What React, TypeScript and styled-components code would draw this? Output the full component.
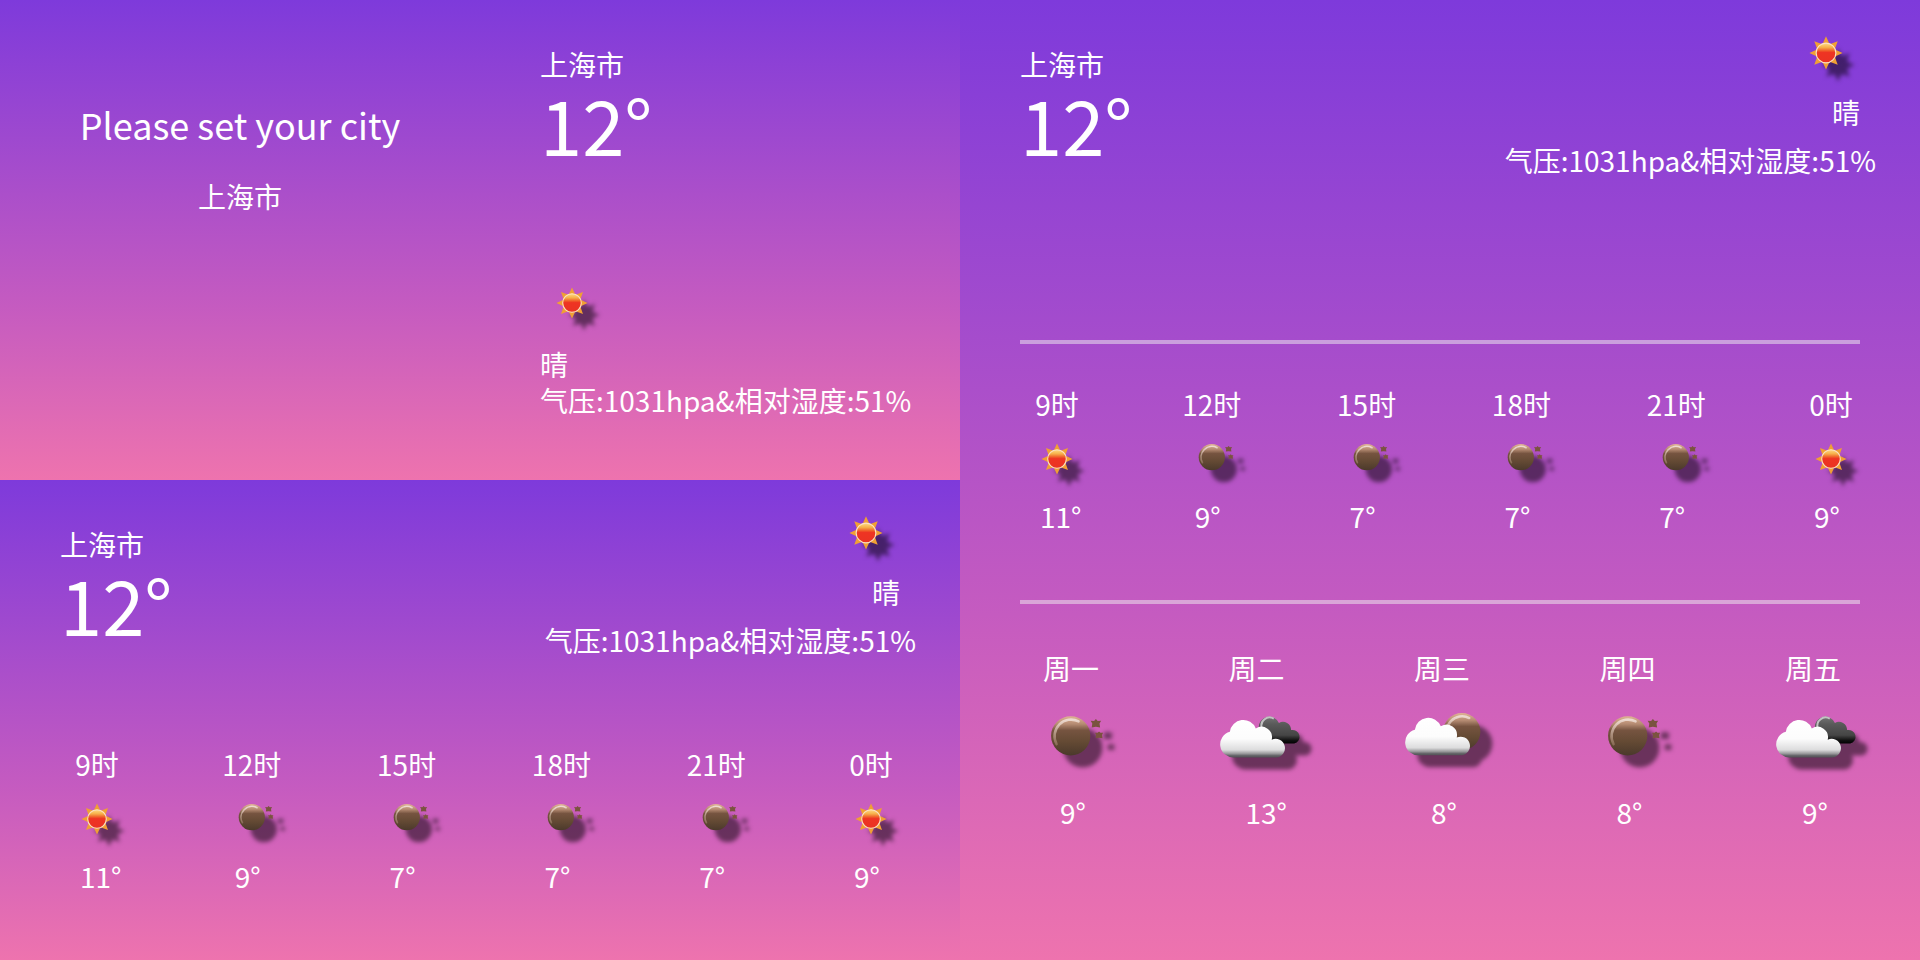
import React, { useId, useState } from "react";
import styled, { createGlobalStyle } from "styled-components";

const GlobalStyle = createGlobalStyle`
  * { box-sizing: border-box; }
  body {
    margin: 0;
    color: #fff;
    font-family: "Noto Sans CJK SC", "Noto Sans", sans-serif;
    font-size: 28px;
    line-height: 36px;
  }
`;

const Board = styled.main`
  display: grid;
  grid-template-columns: 1fr 1fr;
  min-height: 100vh;
`;

const Column = styled.div`
  display: grid;
  grid-template-rows: 1fr 1fr;
`;

const Pair = styled.div`
  display: grid;
  grid-template-columns: 1fr 1fr;
`;

const Card = styled.section`
  display: flex;
  flex-direction: column;
  min-width: 0;
  background: linear-gradient(#7e3adb, #c55bc0 64%, #ee73ae);
`;

const SetupCard = styled(Card)`
  align-items: center;
  gap: 30px;
  padding: 100px 40px 60px;
`;

const SetupLabel = styled.label`
  font-size: 36px;
  line-height: 48px;
`;

const CityInput = styled.input`
  width: 100%;
  height: 36px;
  padding: 0;
  border: 0;
  outline: 0;
  background: transparent;
  color: inherit;
  font: inherit;
  text-align: center;
`;

const SmallCard = styled(Card)`
  justify-content: space-between;
  padding: 46px 0 62px 60px;
`;

const City = styled.h2`
  margin: 0;
  font-size: 28px;
  font-weight: 400;
`;

const Temperature = styled.p`
  margin: 0;
  font-size: 76px;
  line-height: 82px;
`;

const SmallSummary = styled.div`
  white-space: nowrap;

  svg { margin-bottom: 10px; }
`;

const Line = styled.p`
  margin: 0;
`;

const Header = styled.header`
  display: flex;
  justify-content: space-between;
  min-height: 184px;
  padding: 0 44px 0 60px;
`;

const Place = styled.div`
  padding-top: 46px;
`;

const Summary = styled.div`
  display: flex;
  flex-direction: column;
  align-items: flex-end;
  padding-top: 20px;
  line-height: 48px;
  white-space: nowrap;
`;

const Condition = styled.div`
  display: flex;
  flex-direction: column;
  align-items: flex-end;
  margin-right: 16px;
`;

const Divider = styled.hr`
  height: 4px;
  margin: 0 60px;
  border: 0;
  background: rgba(240, 240, 240, 0.5);
`;

const Forecast = styled.ol<{ $top: number; $bottom: number }>`
  display: flex;
  justify-content: space-between;
  margin: 0;
  padding: ${(p) => p.$top}px 57px ${(p) => p.$bottom}px 65px;
  list-style: none;
`;

const Daily = styled(Forecast)`
  padding-left: 63px;
  padding-right: 59px;
`;

const Slot = styled.li<{ $width: number }>`
  display: flex;
  flex-direction: column;
  align-items: center;
  gap: 6px;
  width: ${(p) => p.$width}px;
`;

const SlotTemp = styled.span<{ $indent: number }>`
  align-self: stretch;
  padding-left: ${(p) => p.$indent}px;
`;

const Spacer = styled.div`
  flex: 1;
`;

const TopArea = styled.div`
  min-height: 340px;
`;

const Glyph = styled.svg`
  display: block;
  flex: none;
  overflow: visible;
  filter: drop-shadow(12px 12px 2px rgba(0, 0, 0, 0.5));
`;

type Weather = "sun" | "moon" | "cloudy" | "cloudyNight";

function Sun({ id }: { id: string }) {
  return (
    <>
      <defs>
        <linearGradient id={`${id}-s`} x1="0" y1="0" x2="0" y2="1">
          <stop offset="0" stopColor="#ffdc84" />
          <stop offset="0.22" stopColor="#f6b04a" />
          <stop offset="0.4" stopColor="#ef5a28" />
          <stop offset="0.48" stopColor="#ee3423" />
          <stop offset="1" stopColor="#ea3323" />
        </linearGradient>
      </defs>
      <g fill="#f0a033">
        {[0, 45, 90, 135, 180, 225, 270, 315].map((a) => (
          <path key={a} d="M32 15.4 L36.2 24.6 H27.8 Z" transform={`rotate(${a} 32 31)`} />
        ))}
      </g>
      <circle cx="32" cy="31" r="9.3" fill={`url(#${id}-s)`} stroke="#fbe2c4" strokeWidth="1.1" />
    </>
  );
}

function MoonDisc({ id, cx, cy, r }: { id: string; cx: number; cy: number; r: number }) {
  return (
    <>
      <defs>
        <linearGradient id={`${id}-m`} x1="0" y1="0" x2="0" y2="1">
          <stop offset="0" stopColor="#e0b394" />
          <stop offset="0.2" stopColor="#b58b72" />
          <stop offset="0.36" stopColor="#765440" />
          <stop offset="0.65" stopColor="#644a34" />
          <stop offset="1" stopColor="#4b392b" />
        </linearGradient>
        <linearGradient id={`${id}-h`} x1="0" y1="0" x2="0" y2="1">
          <stop offset="0" stopColor="#f2e4dc" stopOpacity="0.85" />
          <stop offset="1" stopColor="#c9a78f" stopOpacity="0.4" />
        </linearGradient>
      </defs>
      <circle cx={cx} cy={cy} r={r} fill={`url(#${id}-m)`} />
      <path
        d={`M${cx - r * 0.72} ${cy + r * 0.42} A${r * 0.84} ${r * 0.84} 0 0 1 ${cx + r * 0.4} ${cy - r * 0.73}`}
        fill="none"
        stroke={`url(#${id}-h)`}
        strokeWidth="1.7"
        strokeLinecap="round"
      />
    </>
  );
}

function Moon({ id }: { id: string }) {
  return (
    <>
      <MoonDisc id={id} cx={31.8} cy={29.2} r={13.1} />
      <g fill="#7a533f">
        <path d="M48.6 18 L49.8 19.3 L52.1 19.1 L51 21 L51.4 23.6 L48.6 23.2 L45.8 23.6 L46.2 21 L45.1 19.1 L47.4 19.3 Z" />
        <path d="M50.7 26.3 L51.7 27.2 L53.4 27.2 L52.7 28.6 L53 30.8 L50.7 30.5 L48.4 30.8 L48.7 28.6 L48 27.2 L49.7 27.2 Z" />
      </g>
    </>
  );
}

function FrontCloud({ id, top }: { id: string; top: number }) {
  return (
    <>
      <defs>
        <linearGradient id={`${id}-c`} gradientUnits="userSpaceOnUse" x1="0" y1="18.7" x2="0" y2="43.6">
          <stop offset="0" stopColor="#ffffff" />
          <stop offset="0.5" stopColor="#fcfcfc" />
          <stop offset="0.8" stopColor="#dcdcdd" />
          <stop offset="0.9" stopColor="#98989a" />
          <stop offset="0.95" stopColor="#66666a" />
          <stop offset="1" stopColor="#505054" />
        </linearGradient>
      </defs>
      <path
        transform={`translate(0 ${top})`}
        fill={`url(#${id}-c)`}
        d="M16.4 43.6 A8.7 8.7 0 0 1 13.9 26.5 A9 9 0 0 1 31.2 24.3 A7 7 0 0 1 41.8 31.8 A6.2 6.2 0 1 1 44.7 43.6 Z"
      />
    </>
  );
}

function Cloudy({ id }: { id: string }) {
  return (
    <>
      <defs>
        <linearGradient id={`${id}-b`} gradientUnits="userSpaceOnUse" x1="0" y1="15.8" x2="0" y2="34.4">
          <stop offset="0" stopColor="#777" />
          <stop offset="0.3" stopColor="#5a5a5a" />
          <stop offset="0.7" stopColor="#454545" />
          <stop offset="0.88" stopColor="#111" />
          <stop offset="1" stopColor="#000" />
        </linearGradient>
      </defs>
      <path
        fill={`url(#${id}-b)`}
        d="M40 34.4 A6.5 6.5 0 0 1 33.2 24 A7 7 0 0 1 46.6 20.6 A5.4 5.4 0 0 1 54.7 25.4 A4.6 4.6 0 1 1 56.8 34.4 Z"
      />
      <path d="M35.2 24 A5.4 5.4 0 0 1 43.2 17.8" fill="none" stroke="#c2c2c2" strokeWidth="1.3" />
      <FrontCloud id={id} top={0} />
    </>
  );
}

function CloudyNight({ id }: { id: string }) {
  return (
    <>
      <MoonDisc id={id} cx={45.2} cy={26.4} r={12.4} />
      <FrontCloud id={id} top={-1.4} />
    </>
  );
}

const drawings: Record<Weather, [React.ComponentType<{ id: string }>, string]> = {
  sun: [Sun, "晴"],
  moon: [Moon, "晴夜"],
  cloudy: [Cloudy, "多云"],
  cloudyNight: [CloudyNight, "夜间多云"],
};

function WeatherIcon({ kind, size }: { kind: Weather; size: number }) {
  const id = useId().replace(/[^a-zA-Z0-9]/g, "");
  const [Drawing, label] = drawings[kind];
  return (
    <Glyph width={size} height={size} viewBox="0 0 64 64" role="img" aria-label={label}>
      <Drawing id={id} />
    </Glyph>
  );
}

const hours: { time: string; kind: Weather; temp: number }[] = [
  { time: "9时", kind: "sun", temp: 11 },
  { time: "12时", kind: "moon", temp: 9 },
  { time: "15时", kind: "moon", temp: 7 },
  { time: "18时", kind: "moon", temp: 7 },
  { time: "21时", kind: "moon", temp: 7 },
  { time: "0时", kind: "sun", temp: 9 },
];

const days: { day: string; kind: Weather; temp: number }[] = [
  { day: "周一", kind: "moon", temp: 9 },
  { day: "周二", kind: "cloudy", temp: 13 },
  { day: "周三", kind: "cloudyNight", temp: 8 },
  { day: "周四", kind: "moon", temp: 8 },
  { day: "周五", kind: "cloudy", temp: 9 },
];

const details = "气压:1031hpa&相对湿度:51%";

function WideHeader({ city }: { city: string }) {
  return (
    <Header>
      <Place>
        <City>{city}</City>
        <Temperature>12°</Temperature>
      </Place>
      <Summary>
        <Condition>
          <WeatherIcon kind="sun" size={68} />
          <Line>晴</Line>
        </Condition>
        <Line>{details}</Line>
      </Summary>
    </Header>
  );
}

function HourlyForecast({ top }: { top: number }) {
  return (
    <Forecast $top={top} $bottom={66}>
      {hours.map((h) => (
        <Slot key={h.time} $width={64}>
          <span>{h.time}</span>
          <WeatherIcon kind={h.kind} size={64} />
          <SlotTemp $indent={15}>{h.temp}°</SlotTemp>
        </Slot>
      ))}
    </Forecast>
  );
}

export default function App() {
  const [city, setCity] = useState("上海市");
  return (
    <>
      <GlobalStyle />
      <Board>
        <Column>
          <Pair>
            <SetupCard>
              <SetupLabel htmlFor="city">Please set your city</SetupLabel>
              <CityInput id="city" value={city} onChange={(e) => setCity(e.target.value)} />
            </SetupCard>
            <SmallCard>
              <div>
                <City>{city}</City>
                <Temperature>12°</Temperature>
              </div>
              <SmallSummary>
                <WeatherIcon kind="sun" size={64} />
                <Line>晴</Line>
                <Line>{details}</Line>
              </SmallSummary>
            </SmallCard>
          </Pair>
          <Card>
            <WideHeader city={city} />
            <Spacer />
            <HourlyForecast top={0} />
          </Card>
        </Column>
        <Card>
          <TopArea>
            <WideHeader city={city} />
          </TopArea>
          <Divider />
          <HourlyForecast top={42} />
          <Divider />
          <Daily $top={46} $bottom={60}>
            {days.map((d) => (
              <Slot key={d.day} $width={96}>
                <span>{d.day}</span>
                <WeatherIcon kind={d.kind} size={96} />
                <SlotTemp $indent={37}>{d.temp}°</SlotTemp>
              </Slot>
            ))}
          </Daily>
        </Card>
      </Board>
    </>
  );
}
